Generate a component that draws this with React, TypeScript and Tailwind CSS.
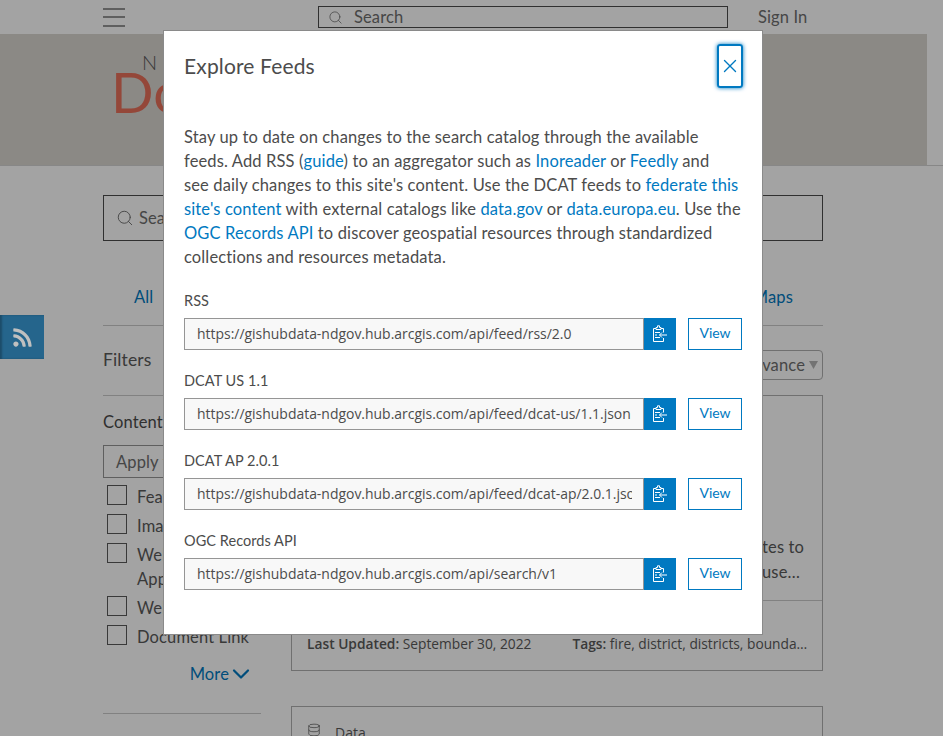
import { Search, ChevronDown, X, Database } from "lucide-react";
import { FaRss } from "react-icons/fa";

const avenir = "font-['Lato','Open_Sans',sans-serif]";
const body = "text-[16.5px] tracking-[0.13px]";

function ClipIcon() {
  return (
    <svg width="16" height="18" viewBox="0 0 16 18" fill="none" stroke="white" strokeWidth="1">
      <path d="M4 3.5H1.5V16.5H11.5V13" />
      <path d="M9 3.5H11.5V7.5" />
      <path d="M4 3.5V2.5H5.5V0.8H7.5V2.5H9V4.5H4Z" />
      <path d="M3 7.5H8M3 10H5M3 12.5H8" />
      <path d="M15 10H7.5M10 7.5L7.5 10L10 12.5" />
    </svg>
  );
}

function Feed({ label, url }: { label: string; url: string }) {
  return (
    <div className="h-[80px]">
      <div className="h-[21px] text-[14.5px] tracking-[0.05px] leading-[20px] text-[#4c4c4c]">{label}</div>
      <div className="flex h-[32px] mt-[6px]">
        <div className="w-[460px] h-[32px] border border-[#959595] bg-[#f8f8f8] pl-[12px] pr-[11px]">
          <div className="text-[13.95px] leading-[30px] text-[#4c4c4c] font-['Open_Sans',sans-serif] whitespace-nowrap overflow-hidden">
            {url}
          </div>
        </div>
        <div className="w-[32px] h-[32px] bg-[#0079c1] flex items-center justify-center">
          <ClipIcon />
        </div>
        <div className="ml-[12px] w-[54px] h-[32px] border border-[#0079c1] text-[#0079c1] text-[14px] leading-[28px] text-center">
          View
        </div>
      </div>
    </div>
  );
}

function Check({ label, extra }: { label: string; extra?: string }) {
  return (
    <div className="flex pl-[4px] mb-[5px]">
      <div className="w-[20px] h-[20px] border border-[#595959] bg-white shrink-0" />
      <div className={`ml-[10px] ${body} leading-[24px] text-[#595959] whitespace-nowrap`}>
        {label}
        {extra && <div>{extra}</div>}
      </div>
    </div>
  );
}

export default function App() {
  const link = "text-[#0079c1]";
  return (
    <div className={`relative w-[943px] h-[736px] overflow-hidden bg-white ${avenir} text-[#4c4c4c]`}>
      {/* Page behind the dialog */}
      <header className="flex items-center h-[34px] w-[927px] pl-[103px]">
        <div className="w-[22px] flex flex-col gap-[6.5px]">
          <div className="h-[2px] bg-[#959595]" />
          <div className="h-[2px] bg-[#959595]" />
          <div className="h-[2px] bg-[#959595]" />
        </div>
        <div className={`ml-[193px] w-[410px] h-[22px] border border-[#4c4c4c] flex items-center pl-[9px] ${body} text-[#6e6e6e]`}>
          <Search size={15} strokeWidth={1.25} />
          <span className="ml-[11px]">Search</span>
        </div>
        <span className={`ml-[30px] ${body} text-[#6e6e6e]`}>Sign In</span>
      </header>
      <div className="w-[927px] h-[131px] bg-[#d9d6d1] pl-[111px] pt-[19px]">
        <div className="pl-[31px] text-[20px] leading-[18px] font-light text-[#595959]">N</div>
        <div className="text-[56px] leading-[56px] text-[#e8705a] -mt-[7px]">Do</div>
      </div>
      <div className="h-px bg-[#d4d4d4]" />
      <div className="w-[720px] ml-[103px] mt-[29px]">
        <div className={`h-[46px] border border-[#4c4c4c] flex items-center pl-[12px] ${body} text-[#6e6e6e]`}>
          <Search size={18} strokeWidth={1.25} />
          <span className="ml-[5px]">Search</span>
        </div>
        <div className={`h-[85px] border-b border-[#cacaca] flex items-center justify-between pl-[31px] pr-[30px] pt-[29px] ${body} text-[#0079c1]`}>
          <span>All</span>
          <span>Maps</span>
        </div>
        <div className="flex mt-[24px]">
          <aside className="w-[158px]">
            <div className="h-[46px] border-b border-[#cacaca] text-[17.5px] tracking-[0.13px] leading-[20px] text-[#595959]">Filters</div>
            <div className={`mt-[14px] ${body} leading-[24px]`}>Content Type</div>
            <div className={`mt-[11px] h-[33px] border border-[#959595] pl-[12px] ${body} leading-[32px] text-[#6e6e6e]`}>Apply filter</div>
            <div className="mt-[7px]">
              <Check label="Feature Layer" />
              <Check label="Image Service" />
              <Check label="Web Mapping" extra="Application" />
              <Check label="Web Map" />
              <Check label="Document Link" />
            </div>
            <div className={`mt-[13px] h-[24px] pr-[6px] flex justify-end items-center ${body} text-[#0079c1]`}>
              More
              <ChevronDown size={28} strokeWidth={1.9} className="-ml-[2px]" />
            </div>
            <div className="mt-[27px] h-px bg-[#cacaca]" />
          </aside>
          <main className="ml-[30px] w-[532px]">
            <div className="flex justify-end">
              <div className={`h-[30px] w-[160px] border border-[#b0b0b0] rounded-[4px] flex items-center justify-end pr-[4px] ${body} text-[#6e6e6e]`}>
                Relevance
                <svg width="9" height="8" viewBox="0 0 9 8" className="ml-[4px]"><path d="M0 0H9L4.5 8Z" fill="#b5b5b5" /></svg>
              </div>
            </div>
            <div className="mt-[15px] h-[276px] border border-[#b0b0b0] flex flex-col">
              <div className={`h-[204px] pr-[18px] pt-[139px] ${body} leading-[24px] text-right text-[#595959]`}>
                <div>updates to</div>
                <div className="mt-[1px] pr-[4px]">this dataset, use…</div>
              </div>
              <div className="h-px bg-[#cacaca]" />
              <div className="flex items-center pt-[33px] pl-[15px] text-[13.75px] leading-[20px] font-['Open_Sans',sans-serif] text-[#595959] whitespace-nowrap">
                <span><b className="font-semibold">Last Updated:</b> September 30, 2022</span>
                <span className="ml-[41px]"><b className="font-semibold">Tags:</b> fire, district, districts, bounda…</span>
              </div>
            </div>
            <div className="mt-[35px] h-[100px] border border-[#b0b0b0] flex items-start pl-[15px] pt-[16px] text-[14px] text-[#595959]">
              <Database size={14} strokeWidth={1.25} />
              <span className="ml-[14px] leading-[20px] font-['Open_Sans',sans-serif]">Data</span>
            </div>
          </main>
        </div>
      </div>

      {/* Overlay */}
      <div className="absolute inset-0 bg-black/[0.36]" />
      {/* RSS side tab */}
      <div className="absolute left-0 top-[315px] w-[44px] h-[44px] bg-[#25658c] flex items-center justify-center text-[#c0c0c0] shadow-[inset_2px_0_2px_rgba(0,0,0,0.25)]">
        <FaRss size={21} />
      </div>

      {/* Dialog */}
      <div className="absolute inset-0 pr-[17px] pt-[30px] flex justify-center items-start">
        <div className="w-[600px] h-[605px] bg-white border border-[#8a8a8a] px-[20px]">
          <div className="flex items-start justify-between h-[92px] pt-[13px]">
            <h2 className="text-[21px] tracking-[0.15px] leading-[44px] text-[#4c4c4c] font-normal">Explore Feeds</h2>
            <button className="w-[26px] h-[44px] -mr-[1px] rounded-[3px] border-2 border-[#0079c1] flex items-center justify-center text-[#0079c1] shadow-[0_0_4px_#0079c1]">
              <X size={28} strokeWidth={1.5} />
            </button>
          </div>
          <p className={`${body} leading-[24px] text-[#4c4c4c] mt-[2px]`}>
            Stay up to date on changes to the search catalog through the available
            <br />
            feeds. Add RSS (<span className={link}>guide</span>) to an aggregator such as <span className={link}>Inoreader</span> or <span className={link}>Feedly</span> and
            <br />
            see daily changes to this site's content. Use the DCAT feeds to <span className={link}>federate this</span>
            <br />
            <span className={link}>site's content</span> with external catalogs like <span className={link}>data.gov</span> or <span className={link}>data.europa.eu</span>. Use the
            <br />
            <span className={link}>OGC Records API</span> to discover geospatial resources through standardized
            <br />
            collections and resources metadata.
          </p>
          <div className="mt-[22px]">
            <Feed label="RSS" url="https://gishubdata-ndgov.hub.arcgis.com/api/feed/rss/2.0" />
            <Feed label="DCAT US 1.1" url="https://gishubdata-ndgov.hub.arcgis.com/api/feed/dcat-us/1.1.json" />
            <Feed label="DCAT AP 2.0.1" url="https://gishubdata-ndgov.hub.arcgis.com/api/feed/dcat-ap/2.0.1.json" />
            <Feed label="OGC Records API" url="https://gishubdata-ndgov.hub.arcgis.com/api/search/v1" />
          </div>
        </div>
      </div>
    </div>
  );
}
